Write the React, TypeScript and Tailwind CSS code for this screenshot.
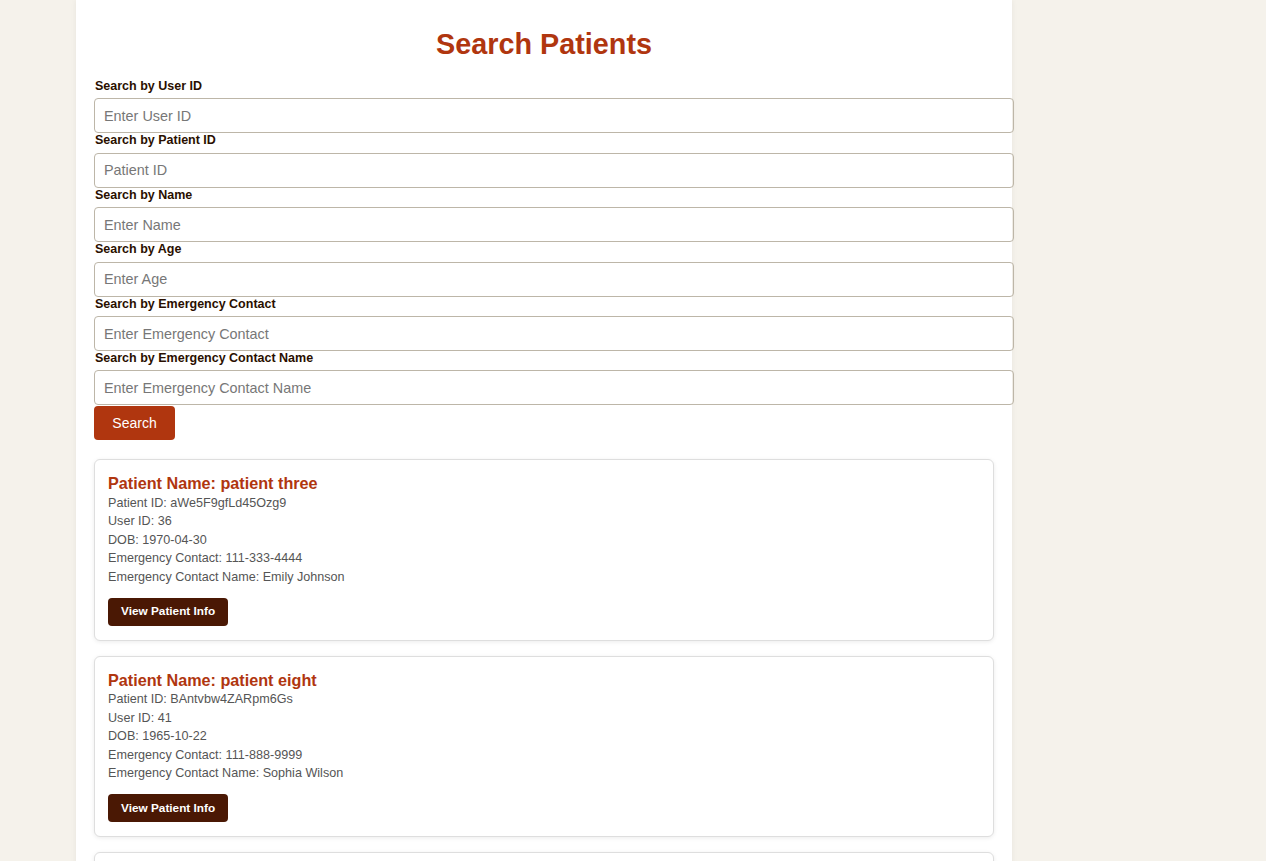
import { useState } from 'react'

type Patient = {
  name: string
  patientId: string
  userId: string
  dob: string
  contact: string
  contactName: string
}

const patients: Patient[] = [
  { name: 'patient three', patientId: 'aWe5F9gfLd45Ozg9', userId: '36', dob: '1970-04-30', contact: '111-333-4444', contactName: 'Emily Johnson' },
  { name: 'patient eight', patientId: 'BAntvbw4ZARpm6Gs', userId: '41', dob: '1965-10-22', contact: '111-888-9999', contactName: 'Sophia Wilson' },
  { name: 'patient one', patientId: 'kP2x7QwLm93RtZa1', userId: '34', dob: '1980-01-15', contact: '111-222-3333', contactName: 'John Smith' },
]

const fields = [
  { key: 'userId', label: 'Search by User ID', placeholder: 'Enter User ID' },
  { key: 'patientId', label: 'Search by Patient ID', placeholder: 'Patient ID' },
  { key: 'name', label: 'Search by Name', placeholder: 'Enter Name' },
  { key: 'age', label: 'Search by Age', placeholder: 'Enter Age' },
  { key: 'contact', label: 'Search by Emergency Contact', placeholder: 'Enter Emergency Contact' },
  { key: 'contactName', label: 'Search by Emergency Contact Name', placeholder: 'Enter Emergency Contact Name' },
]

function PatientCard({ p }: { p: Patient }) {
  return (
    <div className="bg-white border border-[#dedede] rounded-[6px] shadow-[0_1px_4px_rgba(0,0,0,0.08)] px-[13px] pt-[13px] pb-[14px]">
      <h3 className="text-[16.2px] leading-[20.5px] font-bold text-[#b0360f]">Patient Name: {p.name}</h3>
      <div className="text-[12.6px] leading-[18.5px] text-[#555]">
        <p>Patient ID: {p.patientId}</p>
        <p>User ID: {p.userId}</p>
        <p>DOB: {p.dob}</p>
        <p>Emergency Contact: {p.contact}</p>
        <p>Emergency Contact Name: {p.contactName}</p>
      </div>
      <button className="mt-[11.5px] h-[28px] px-[13px] rounded-[4px] bg-[#4a1804] text-white text-[11.8px] font-bold">
        View Patient Info
      </button>
    </div>
  )
}

export default function App() {
  const [values, setValues] = useState<Record<string, string>>({})

  return (
    <div className="min-h-screen bg-[#f5f2eb] font-['Liberation_Sans',Arial,sans-serif]">
      <div className="ml-[76px] w-[936px] min-h-screen bg-white shadow-[0_0_6px_rgba(0,0,0,0.06)] px-[18px] pt-[28px] pb-[20px]">
        <h2 className="text-center text-[28.8px] leading-[33px] font-bold text-[#b0360f] mb-[18px]">Search Patients</h2>

        {/* Search form */}
        <div className="flex flex-col">
          {fields.map((f) => (
            <div key={f.key}>
              <label className="block pl-[1px] text-[12.5px] leading-[14.4px] font-bold text-[#2a0f00] mb-[5px]">{f.label}</label>
              <input
                value={values[f.key] ?? ''}
                onChange={(e) => setValues({ ...values, [f.key]: e.target.value })}
                placeholder={f.placeholder}
                className="block w-[920px] h-[35px] px-[9px] border border-[#bdb6a8] rounded-[4px] text-[14.4px] text-[#333] placeholder:text-[#777] outline-none"
              />
            </div>
          ))}
          <button className="mt-[1px] w-[81px] h-[34px] rounded-[4px] bg-[#b0360f] text-white text-[14px]">Search</button>
        </div>

        {/* Results */}
        <div className="mt-[19px] flex flex-col gap-[15px] w-[900px]">
          {patients.map((p) => (
            <PatientCard key={p.patientId} p={p} />
          ))}
        </div>
      </div>
    </div>
  )
}
